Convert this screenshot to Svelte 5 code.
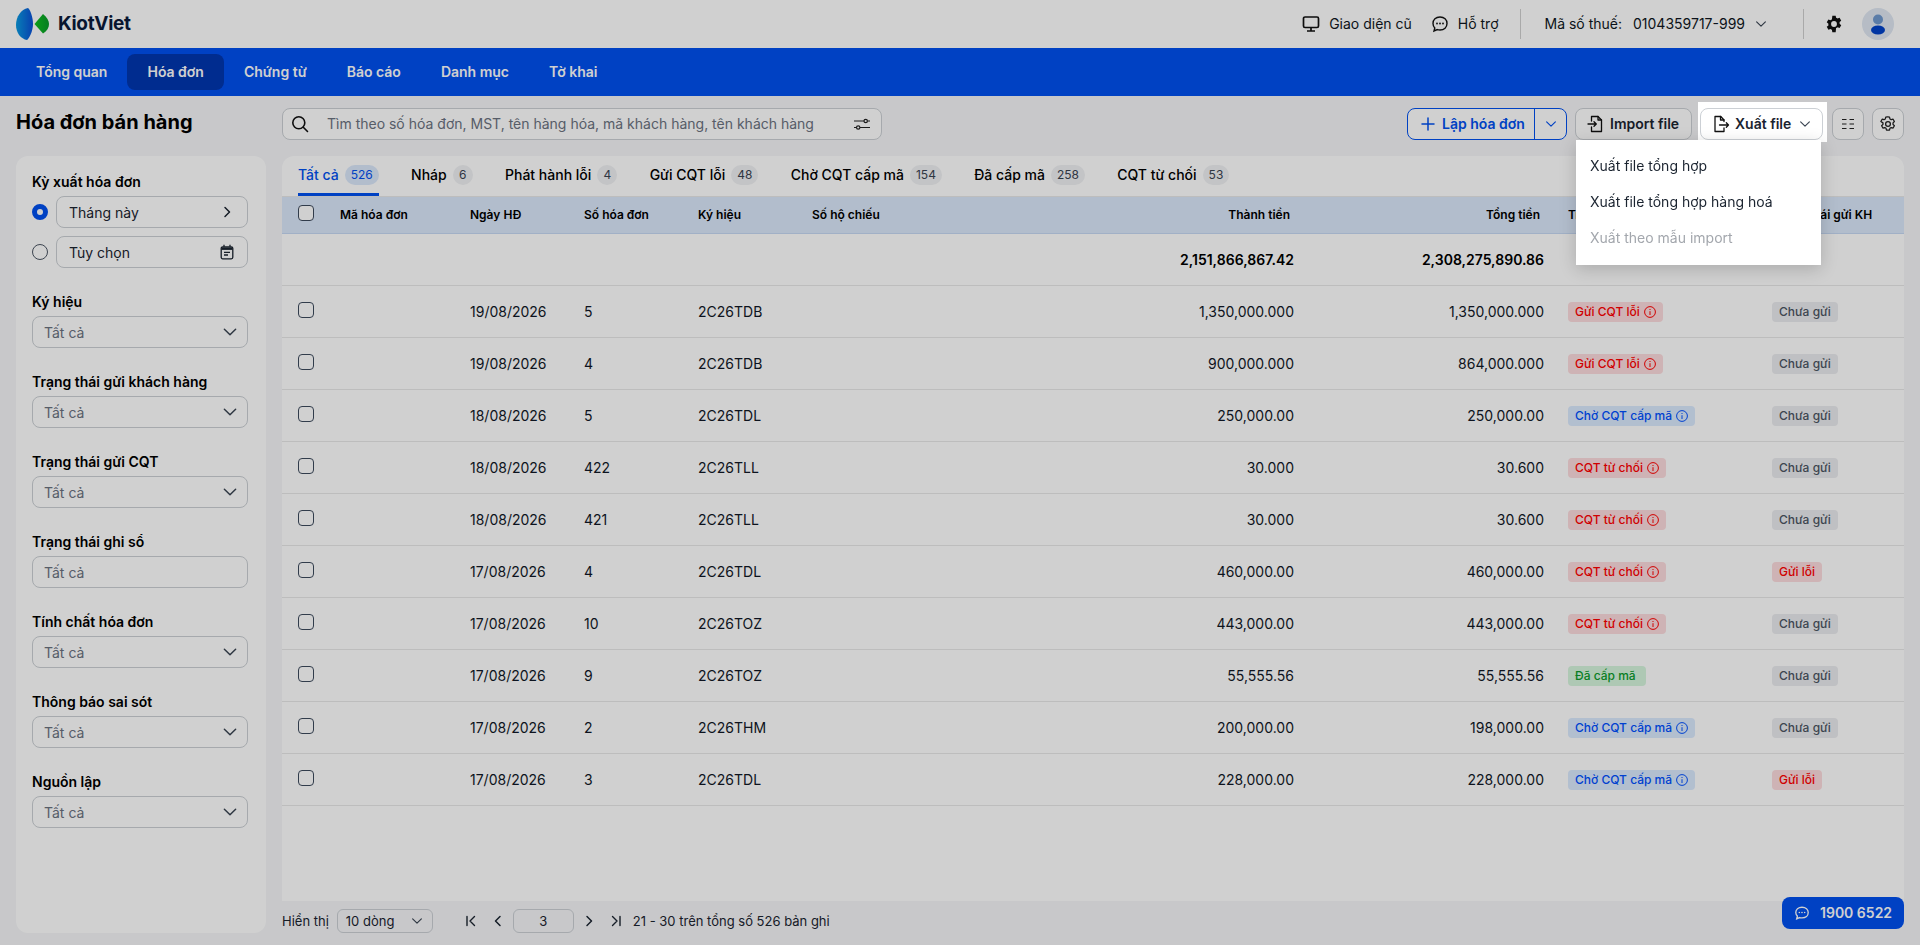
<script>
  const navItems = ['Tổng quan', 'Hóa đơn', 'Chứng từ', 'Báo cáo', 'Danh mục', 'Tờ khai'];
  const tabs = [
    ['Tất cả', 526], ['Nháp', 6], ['Phát hành lỗi', 4], ['Gửi CQT lỗi', 48],
    ['Chờ CQT cấp mã', 154], ['Đã cấp mã', 258], ['CQT từ chối', 53]
  ];
  const filters = [
    ['Ký hiệu', true], ['Trạng thái gửi khách hàng', true], ['Trạng thái gửi CQT', true],
    ['Trạng thái ghi sổ', false], ['Tính chất hóa đơn', true], ['Thông báo sai sót', true], ['Nguồn lập', true]
  ];
  const rows = [
    ['19/08/2026', '5', '2C26TDB', '1,350,000.000', '1,350,000.000', 'Gửi CQT lỗi', 'red', 'Chưa gửi', 'gray'],
    ['19/08/2026', '4', '2C26TDB', '900,000.000', '864,000.000', 'Gửi CQT lỗi', 'red', 'Chưa gửi', 'gray'],
    ['18/08/2026', '5', '2C26TDL', '250,000.00', '250,000.00', 'Chờ CQT cấp mã', 'blue', 'Chưa gửi', 'gray'],
    ['18/08/2026', '422', '2C26TLL', '30.000', '30.600', 'CQT từ chối', 'red', 'Chưa gửi', 'gray'],
    ['18/08/2026', '421', '2C26TLL', '30.000', '30.600', 'CQT từ chối', 'red', 'Chưa gửi', 'gray'],
    ['17/08/2026', '4', '2C26TDL', '460,000.00', '460,000.00', 'CQT từ chối', 'red', 'Gửi lỗi', 'red'],
    ['17/08/2026', '10', '2C26TOZ', '443,000.00', '443,000.00', 'CQT từ chối', 'red', 'Chưa gửi', 'gray'],
    ['17/08/2026', '9', '2C26TOZ', '55,555.56', '55,555.56', 'Đã cấp mã', 'green', 'Chưa gửi', 'gray'],
    ['17/08/2026', '2', '2C26THM', '200,000.00', '198,000.00', 'Chờ CQT cấp mã', 'blue', 'Chưa gửi', 'gray'],
    ['17/08/2026', '3', '2C26TDL', '228,000.00', '228,000.00', 'Chờ CQT cấp mã', 'blue', 'Gửi lỗi', 'red']
  ];
</script>

{#snippet chevron(size = 16)}
  <svg class="chev" width={size} height={size} viewBox="0 0 16 16" fill="none" stroke="currentColor" stroke-width="1.3" stroke-linecap="round" stroke-linejoin="round"><path d="M3 5.5 8 10.5 13 5.5" /></svg>
{/snippet}

<div class="page">
  <header class="topbar">
    <div class="brand">
      <svg width="34" height="34" viewBox="15 7 34 34">
        <defs>
          <linearGradient id="lb" x1="0" y1="0" x2="1" y2="0">
            <stop offset="0" stop-color="#0a9be0" /><stop offset="1" stop-color="#0a50d8" />
          </linearGradient>
          <linearGradient id="lg" x1="0" y1="0" x2="1" y2="0">
            <stop offset="0" stop-color="#0fc21e" /><stop offset="1" stop-color="#0a9a2a" />
          </linearGradient>
        </defs>
        <path d="M28 8C21 9 16 17 16 25c0 8 5 14 11 15 2-1 6-9 6-16 0-7-3-15-5-16Z" fill="url(#lb)" />
        <path d="M43 14C47 17 49 21 49 24c0 4-2 7-6 9.500L34.500 24Z" fill="url(#lg)" />
      </svg>
      <span>KiotViet</span>
    </div>
    <div class="top-right">
      <span class="tlink">
        <svg width="18" height="18" viewBox="0 0 18 18" fill="none" stroke="#111" stroke-width="1.7"><rect x="1.500" y="2" width="15" height="10.500" rx="1.500" /><path d="M9 12.500V16M5 16h8" /></svg>
        Giao diện cũ
      </span>
      <span class="tlink second">
        <svg width="18" height="18" viewBox="0 0 18 18" fill="none" stroke="#111" stroke-width="1.4"><path d="M9 2c4.200 0 7 2.800 7 6.500S13.200 15 9 15c-1 0-1.900-.2-2.700-.4L3 16l.8-3C2.700 11.800 2 10.300 2 8.500 2 4.800 4.800 2 9 2Z" /><circle cx="6" cy="8.500" r=".9" fill="#111" stroke="none" /><circle cx="9" cy="8.500" r=".9" fill="#111" stroke="none" /><circle cx="12" cy="8.500" r=".9" fill="#111" stroke="none" /></svg>
        Hỗ trợ
      </span>
      <i class="vline first"></i>
      <span class="tax">Mã số thuế:</span>
      <span class="taxv">0104359717-999</span>
      {@render chevron(14)}
      <i class="vline last"></i>
      <svg class="gear" width="20" height="20" viewBox="0 0 24 24" fill="#111"><path fill-rule="evenodd" d="M14 2l.5 2.600c.6.200 1.200.5 1.700.9l2.500-.9 2 3.400-2 1.700a7 7 0 0 1 0 2l2 1.700-2 3.400-2.500-.9c-.5.400-1.100.7-1.700.9L14 22h-4l-.5-3.200c-.6-.2-1.200-.5-1.700-.9l-2.500.9-2-3.400 2-1.700a7 7 0 0 1 0-2l-2-1.700 2-3.400 2.500.9c.5-.4 1.100-.7 1.700-.9L10 2h4Zm-2 6.500a3.500 3.500 0 1 0 0 7 3.500 3.500 0 0 0 0-7Z" /></svg>
      <span class="avatar">
        <svg width="32" height="32" viewBox="0 0 32 32"><circle cx="16" cy="11.500" r="5" fill="#6f98cf" /><ellipse cx="16" cy="22" rx="7" ry="4.500" fill="#0041c8" /></svg>
      </span>
    </div>
  </header>

  <nav class="nav">
    {#each navItems as item, i}
      <span class="nav-item" class:active={i === 1}>{item}</span>
    {/each}
  </nav>

  <main class="main">
    <aside class="left">
      <h1>Hóa đơn bán hàng</h1>
      <div class="filters">
        <div class="group">
          <div class="flabel">Kỳ xuất hóa đơn</div>
          <div class="radio-row">
            <span class="radio on"></span>
            <div class="field pick">
              <span class="val">Tháng này</span>
              <svg width="16" height="16" viewBox="0 0 16 16" fill="none" stroke="#1b2430" stroke-width="1.500" stroke-linecap="round" stroke-linejoin="round"><path d="M6 3.500 10.500 8 6 12.500" /></svg>
            </div>
          </div>
          <div class="radio-row r2">
            <span class="radio"></span>
            <div class="field pick">
              <span class="val">Tùy chọn</span>
              <svg width="16" height="16" viewBox="0 0 16 16" fill="none" stroke="#1b2430" stroke-width="1.300"><rect x="2.200" y="2.800" width="11.600" height="12" rx="1.500" /><path d="M2.500 4.600h11" stroke-width="2.600" /><path d="M5 .8v2M11 .8v2M5 8.300h6M5 11h4" /></svg>
            </div>
          </div>
        </div>
        {#each filters as f}
          <div class="group">
            <div class="flabel">{f[0]}</div>
            <div class="field sel">
              <span class="ph">Tất cả</span>
              {#if f[1]}{@render chevron(18)}{/if}
            </div>
          </div>
        {/each}
      </div>
    </aside>

    <section class="right">
      <div class="toolbar">
        <div class="search">
          <svg width="18" height="18" viewBox="0 0 18 18" fill="none" stroke="#111" stroke-width="1.600" stroke-linecap="round"><circle cx="7.800" cy="7.800" r="6" /><path d="m12.300 12.300 4.200 4.200" /></svg>
          <span class="search-ph">Tìm theo số hóa đơn, MST, tên hàng hóa, mã khách hàng, tên khách hàng</span>
          <svg class="slid" width="18" height="18" viewBox="0 0 18 18" fill="none" stroke="#222" stroke-width="1.200"><path d="M1 6h10M14.500 6H17M1 12.500h2.500M7 12.500h10" /><circle cx="12.700" cy="6" r="1.700" /><circle cx="5.200" cy="12.500" r="1.700" /></svg>
        </div>
        <div class="actions">
          <div class="split">
            <span class="split-main">
              <svg width="16" height="16" viewBox="0 0 16 16" fill="none" stroke="currentColor" stroke-width="1.500" stroke-linecap="round"><path d="M8 2v12M2 8h12" /></svg>
              Lập hóa đơn
            </span>
            <span class="split-arrow">{@render chevron(14)}</span>
          </div>
          <span class="btn import">
            <svg width="18" height="18" viewBox="0 0 18 18" fill="none" stroke="#111" stroke-width="1.300" stroke-linejoin="round" stroke-linecap="round"><path d="M4.500 6V1.500h6.500l3.500 3.500v11.500H4.500V12" /><path d="M11 1.500V5h3.500" /><path d="M1 9h8M7 6.800 9.300 9 7 11.200" /></svg>
            Import file
          </span>
          <div class="spot">
            <span class="btn export">
              <svg width="18" height="18" viewBox="0 0 18 18" fill="none" stroke="#111" stroke-width="1.300" stroke-linejoin="round" stroke-linecap="round"><path d="M12 6.500V5L8.800 1.500H3v15h9v-3.500" /><path d="M8.500 1.500V5H12" /><path d="M7.500 10H16.500M14.300 7.800 16.500 10l-2.200 2.200" /></svg>
              Xuất file
              {@render chevron(14)}
            </span>
            <div class="menu">
              <div class="mi">Xuất file tổng hợp</div>
              <div class="mi">Xuất file tổng hợp hàng hoá</div>
              <div class="mi off">Xuất theo mẫu import</div>
            </div>
          </div>
          <span class="btn icon">
            <svg width="16" height="16" viewBox="0 0 16 16" fill="none" stroke="#222" stroke-width="1.200"><path d="M2 3.500h4.500M9.500 3.500H14M2 8h4.500M9.500 8H14M2 12.500h4.500M9.500 12.500H14" /></svg>
          </span>
          <span class="btn icon">
            <svg width="18" height="18" viewBox="0 0 24 24" fill="none" stroke="#222" stroke-width="1.700"><path stroke-linejoin="round" d="M12 2.500l2 .3.600 2.500 1.700 1 2.500-.7 1.700 3-1.800 1.900v2l1.800 1.900-1.700 3-2.500-.7-1.700 1-.6 2.500h-4l-.6-2.500-1.700-1-2.500.7-1.700-3 1.800-1.900v-2L2.500 8.600l1.700-3 2.500.7 1.700-1 .6-2.500 2-.3Z" /><circle cx="12" cy="12" r="3.200" /></svg>
          </span>
        </div>
      </div>

      <div class="panel">
        <div class="tabs">
          {#each tabs as t, i}
            <span class="tab" class:on={i === 0}>{t[0]}<b>{t[1]}</b></span>
          {/each}
        </div>
        <div class="row head">
          <span class="cb"></span>
          <span>Mã hóa đơn</span><span>Ngày HĐ</span><span>Số hóa đơn</span><span>Ký hiệu</span><span>Số hộ chiếu</span>
          <span class="num hnum">Thành tiền</span><span class="num hnum">Tổng tiền</span>
          <span class="st">Trạng thái gửi CQT</span><span>Trạng thái gửi KH</span>
        </div>
        <div class="row total">
          <span></span><span></span><span></span><span></span><span></span><span></span>
          <span class="num">2,151,866,867.42</span><span class="num">2,308,275,890.86</span>
        </div>
        {#each rows as r}
          <div class="row body">
            <span class="cb"></span>
            <span></span><span>{r[0]}</span><span>{r[1]}</span><span>{r[2]}</span><span></span>
            <span class="num">{r[3]}</span><span class="num">{r[4]}</span>
            <span class="st"><em class="pill {r[6]}">{r[5]}
              {#if r[6] !== 'green'}
                <svg width="12" height="12" viewBox="0 0 12 12" fill="none" stroke="currentColor"><circle cx="6" cy="6" r="5.400" /><path d="M6 5.200V9M6 3v1" /></svg>
              {/if}
            </em></span>
            <span><em class="pill {r[8]}">{r[7]}</em></span>
          </div>
        {/each}
      </div>

      <div class="pager">
        <span class="pshow">Hiển thị</span>
        <span class="psel">10 dòng {@render chevron(14)}</span>
        <svg class="p1" width="12" height="12" viewBox="0 0 12 12" fill="none" stroke="#1b2430" stroke-width="1.400" stroke-linecap="round" stroke-linejoin="round"><path d="M2 1.500v9M9.500 1.500 5 6l4.500 4.500" /></svg>
        <svg class="p2" width="12" height="12" viewBox="0 0 12 12" fill="none" stroke="#1b2430" stroke-width="1.500" stroke-linecap="round" stroke-linejoin="round"><path d="M8 1.500 3.500 6 8 10.500" /></svg>
        <span class="pinput">3</span>
        <svg class="p3" width="12" height="12" viewBox="0 0 12 12" fill="none" stroke="#1b2430" stroke-width="1.500" stroke-linecap="round" stroke-linejoin="round"><path d="M4 1.500 8.500 6 4 10.500" /></svg>
        <svg class="p4" width="12" height="12" viewBox="0 0 12 12" fill="none" stroke="#1b2430" stroke-width="1.400" stroke-linecap="round" stroke-linejoin="round"><path d="M10 1.500v9M2.500 1.500 7 6l-4.500 4.500" /></svg>
        <span class="prange">21 - 30 trên tổng số 526 bản ghi</span>
      </div>
    </section>
  </main>

  <div class="hotline">
    <svg width="16" height="16" viewBox="0 0 18 18" fill="none" stroke="currentColor" stroke-width="1.500"><path d="M9 2.500c4.200 0 7 2.500 7 6s-2.800 6-7 6c-1 0-1.900-.2-2.700-.4L3 15.500l.8-3C2.700 11.500 2 10.200 2 8.500c0-3.500 2.800-6 7-6Z" /><circle cx="6" cy="8.500" r=".9" fill="currentColor" stroke="none" /><circle cx="9" cy="8.500" r=".9" fill="currentColor" stroke="none" /><circle cx="12" cy="8.500" r=".9" fill="currentColor" stroke="none" /></svg>
    1900 6522
  </div>

  <div class="overlay"></div>
</div>

<style>
  :global(body) { margin: 0; background: #f5f6f8; overflow: hidden; }
  .page { height: 945px; font: 400 14px/20px Inter, "Noto Sans", sans-serif; color: #0f1722; display: flex; flex-direction: column; overflow: hidden; }
  .overlay { position: fixed; inset: 0; background: rgba(0, 0, 0, .185); z-index: 10; }

  .topbar { height: 48px; flex: none; background: #fff; display: flex; align-items: center; justify-content: space-between; padding: 0 26px 0 15px; box-sizing: border-box; }
  .brand { display: flex; align-items: center; gap: 9px; font-size: 19px; font-weight: 700; color: #0b1a3a; letter-spacing: -.3px; }
  .top-right { display: flex; align-items: center; }
  .tlink { display: flex; align-items: center; gap: 9px; }
  .tlink.second { margin-left: 19px; }
  .vline { width: 1px; height: 30px; background: #d0d0d0; }
  .vline.first { margin: 0 24px 0 21px; }
  .vline.last { margin: 0 20px 0 35px; }
  .tax { margin-right: 11px; }
  .taxv { margin-right: 9px; }
  .chev { flex: none; color: #3a4452; }
  .gear { margin-right: 18px; }
  .avatar { width: 32px; height: 32px; border-radius: 50%; background: #dfe7f2; display: block; }
  .avatar svg { display: block; }

  .nav { height: 48px; flex: none; background: #0050f0; display: flex; align-items: center; padding: 0 16px; box-sizing: border-box; }
  .nav-item { color: #fff; font-weight: 600; padding: 0 20px; height: 36px; line-height: 36px; border-radius: 8px; }
  .nav-item.active { background: #0036b0; }

  .main { flex: 1; min-height: 0; display: flex; gap: 16px; padding: 12px 16px; box-sizing: border-box; }
  .left { width: 250px; flex: none; display: flex; flex-direction: column; }
  h1 { margin: 0 0 16px; height: 32px; font-size: 20px; line-height: 28px; font-weight: 700; color: #000; }
  .filters { flex: 1; background: #fff; border-radius: 12px; padding: 16px 18px 16px 16px; display: flex; flex-direction: column; gap: 24px; }
  .group { display: flex; flex-direction: column; }
  .flabel { font-weight: 600; color: #000; margin-bottom: 4px; }
  .radio-row { display: flex; align-items: center; gap: 8px; }
  .radio-row.r2 { margin-top: 8px; }
  .radio { width: 16px; height: 16px; border-radius: 50%; border: 1.500px solid #4b5563; box-sizing: border-box; background: #fff; flex: none; }
  .radio.on { border: 5px solid #0050f0; }
  .field { height: 32px; flex: 1; box-sizing: border-box; border: 1px solid #ccd0d5; border-radius: 8px; display: flex; align-items: center; justify-content: space-between; }
  .pick { padding: 0 12px 0 12px; }
  .sel { padding: 0 8px 0 11px; flex: none; }
  .val { color: #1b2430; margin-top: 2px; }
  .ph { color: #6b7280; margin-top: 2px; }

  .right { flex: 1; min-width: 0; display: flex; flex-direction: column; }
  .toolbar { height: 32px; margin-bottom: 16px; display: flex; justify-content: space-between; flex: none; }
  .search { width: 600px; box-sizing: border-box; border: 1px solid #ccd0d5; border-radius: 8px; background: #fff; display: flex; align-items: center; padding: 0 10px 0 8px; }
  .search-ph { color: #6b7280; margin-left: 18px; flex: 1; white-space: nowrap; }
  .actions { display: flex; gap: 8px; }
  .split { display: flex; width: 160px; height: 32px; box-sizing: border-box; border: 1px solid #0050f0; border-radius: 8px; color: #0050f0; font-weight: 600; background: #fff; }
  .split-main { flex: 1; display: flex; align-items: center; gap: 6px; padding-left: 12px; }
  .split-arrow { width: 31px; border-left: 1px solid #0050f0; display: flex; align-items: center; justify-content: center; }
  .split-arrow .chev { color: #0050f0; }
  .btn { height: 32px; box-sizing: border-box; border: 1px solid #ccd0d5; border-radius: 8px; background: #fff; display: flex; align-items: center; font-weight: 600; color: #1b2430; }
  .import { width: 117px; gap: 5px; padding-left: 11px; }
  .icon { width: 32px; justify-content: center; }
  .spot { position: relative; z-index: 20; width: 123px; height: 32px; margin-right: 1px; }
  .spot::before { content: ""; position: absolute; inset: -6px -4px -2px -2px; background: #fff; }
  .export { position: relative; gap: 5px; padding-left: 11px; width: 123px; }
  .export .chev { margin-left: 2px; }
  .menu { position: absolute; top: 32px; right: 2px; width: 245px; height: 125px; box-sizing: border-box; padding: 8px 0; background: #fff; box-shadow: 0 4px 16px rgba(0, 0, 0, .18); }
  .mi { height: 36px; line-height: 36px; padding-left: 14px; color: #1b2430; }
  .mi.off { color: #a3a7ad; }

  .panel { flex: 1; min-height: 0; background: #fff; border-radius: 12px 12px 0 0; overflow: hidden; }
  .tabs { height: 41px; box-sizing: border-box; border-bottom: 1px solid #e8e8e8; display: flex; padding-left: 16px; gap: 32.3px; }
  .tab { display: flex; align-items: center; gap: 6px; height: 40px; font-weight: 500; color: #000; box-sizing: border-box; border-bottom: 2px solid transparent; }
  .tab b { font-weight: 400; font-size: 12px; min-width: 20px; height: 20px; box-sizing: border-box; padding: 0 6px; border-radius: 10px; background: #f0f1f3; color: #3a4452; text-align: center; }
  .tab.on { color: #0050f0; border-bottom: 3px solid #0050f0; }
  .tab.on b { background: #dbe8fb; color: #0050f0; }

  .row { display: grid; grid-template-columns: 42px 130px 114px 114px 114px 114px 368px 250px 228px 1fr; padding-left: 16px; box-sizing: border-box; border-bottom: 1px solid #e8e8e8; height: 52px; padding-top: 16px; color: #111827; white-space: nowrap; }
  .row .st { padding-left: 24px; }
  .head { height: 37px; padding-top: 8px; background: #dbe8fb; border-bottom-color: #c6d8f3; font-size: 12px; font-weight: 600; color: #000; }
  .head .hnum { padding-right: 4px; }
  .total { font-weight: 600; color: #000; }
  .cb { display: block; width: 16px; height: 16px; box-sizing: border-box; border: 1.300px solid #3d4a5c; border-radius: 4px; background: #fff; }
  .num { text-align: right; }
  .pill { display: inline-flex; align-items: center; gap: 4px; height: 20px; padding: 0 7px; border-radius: 4px; font-size: 12px; font-weight: 500; font-style: normal; vertical-align: top; }
  .pill.red { background: #fddcde; color: #ff0000; }
  .pill.blue { background: #dbeafe; color: #0050ff; }
  .pill.green { background: #d6f5dd; color: #0a9c2c; padding-right: 10px; }
  .pill.gray { background: #ebecef; color: #4b5563; }

  .pager { flex: none; height: 24px; margin-top: 8px; display: flex; align-items: center; color: #1b2430; white-space: nowrap; font-size: 13px; }
  .psel { width: 96px; height: 24px; margin-left: 8px; box-sizing: border-box; border: 1px solid #ccd0d5; border-radius: 6px; display: flex; align-items: center; justify-content: space-between; padding: 0 8px; background: transparent; }
  .p1 { margin-left: 32px; }
  .p2 { margin-left: 15px; }
  .pinput { width: 61px; height: 24px; margin-left: 9px; box-sizing: border-box; border: 1px solid #ccd0d5; border-radius: 6px; text-align: center; line-height: 22px; }
  .p3 { margin-left: 9px; }
  .p4 { margin-left: 15px; }
  .prange { margin-left: 11px; }

  .hotline { position: absolute; left: 1782px; top: 897px; width: 122px; height: 32px; box-sizing: border-box; background: #0050f0; border-radius: 8px; color: #fff; font-weight: 600; display: flex; align-items: center; gap: 10px; padding-left: 12px; }
</style>
